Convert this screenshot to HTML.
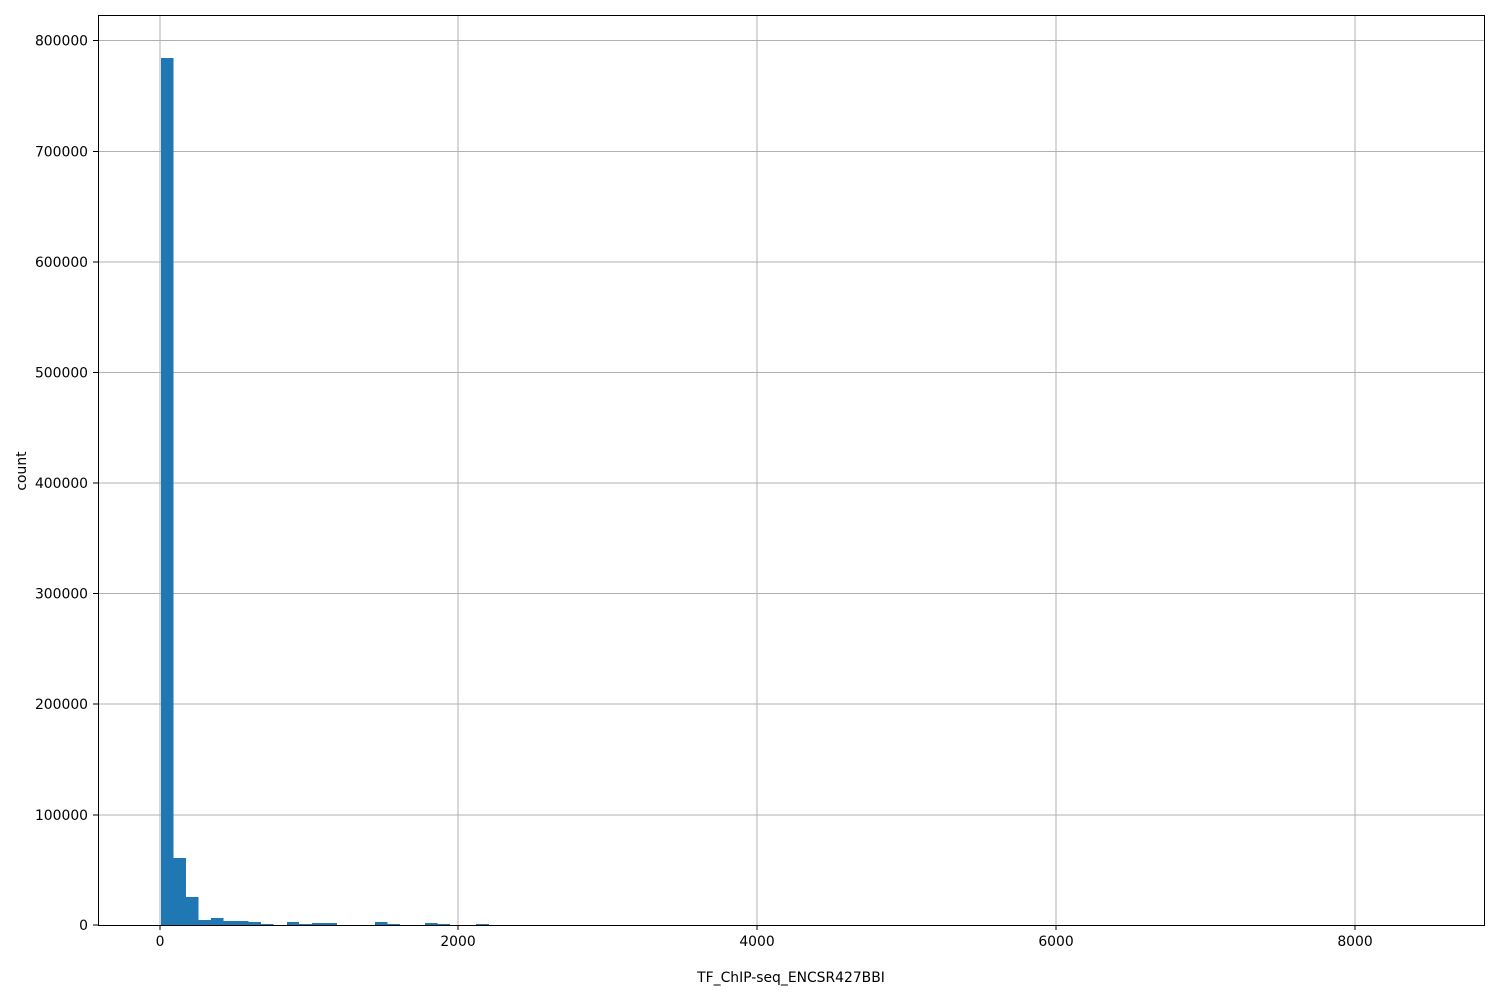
<!DOCTYPE html><html><head><style>body{margin:0;background:#fff}svg{display:block;font-family:"DejaVu Sans",sans-serif}</style></head><body>
<svg width="1500" height="1000" viewBox="0 0 1500 1000">
<g stroke="#b0b0b0" stroke-width="1">
<line x1="160" y1="15" x2="160" y2="925"/><line x1="458" y1="15" x2="458" y2="925"/><line x1="757" y1="15" x2="757" y2="925"/><line x1="1056" y1="15" x2="1056" y2="925"/><line x1="1355" y1="15" x2="1355" y2="925"/>
<line x1="98" y1="40.5" x2="1485" y2="40.5"/><line x1="98" y1="151.5" x2="1485" y2="151.5"/><line x1="98" y1="262" x2="1485" y2="262"/><line x1="98" y1="372.5" x2="1485" y2="372.5"/><line x1="98" y1="483" x2="1485" y2="483"/><line x1="98" y1="593.5" x2="1485" y2="593.5"/><line x1="98" y1="704" x2="1485" y2="704"/><line x1="98" y1="815" x2="1485" y2="815"/>
</g>
<g fill="#1f77b4">
<rect x="161" y="58" width="12.5" height="867"/>
<rect x="173.5" y="858" width="12.5" height="67"/>
<rect x="186" y="897" width="12.5" height="28"/>
<rect x="198.5" y="920" width="12.5" height="5"/>
<rect x="211" y="918" width="12.5" height="7"/>
<rect x="223.5" y="921" width="25" height="4"/>
<rect x="248.5" y="922" width="12.5" height="3"/>
<rect x="261" y="924" width="12.5" height="1"/>
<rect x="287" y="922" width="12" height="3"/>
<rect x="299" y="924" width="13" height="1"/>
<rect x="312" y="923" width="25" height="2"/>
<rect x="375" y="922" width="12.5" height="3"/>
<rect x="387.5" y="924" width="12.5" height="1"/>
<rect x="425" y="923" width="12.5" height="2"/>
<rect x="437.5" y="924" width="12.5" height="1"/>
<rect x="476" y="924" width="13" height="1"/>
</g>
<rect x="98.5" y="15.5" width="1386" height="910" fill="none" stroke="#000" stroke-width="1"/>
<g stroke="#000"><line x1="160" y1="925" x2="160" y2="930"/><line x1="458" y1="925" x2="458" y2="930"/><line x1="757" y1="925" x2="757" y2="930"/><line x1="1056" y1="925" x2="1056" y2="930"/><line x1="1355" y1="925" x2="1355" y2="930"/>
<line x1="93" y1="40.5" x2="98" y2="40.5"/><line x1="93" y1="151.5" x2="98" y2="151.5"/><line x1="93" y1="262" x2="98" y2="262"/><line x1="93" y1="372.5" x2="98" y2="372.5"/><line x1="93" y1="483" x2="98" y2="483"/><line x1="93" y1="593.5" x2="98" y2="593.5"/><line x1="93" y1="704" x2="98" y2="704"/><line x1="93" y1="815" x2="98" y2="815"/><line x1="93" y1="925" x2="98" y2="925"/></g>
<g font-size="13.9" text-anchor="middle" fill="#000">
<text x="160" y="946">0</text><text x="458" y="946">2000</text><text x="757" y="946">4000</text><text x="1056" y="946">6000</text><text x="1355" y="946">8000</text>
<text x="791" y="982">TF_ChIP-seq_ENCSR427BBI</text>
</g>
<g font-size="13.9" text-anchor="end" fill="#000">
<text x="88" y="45.5">800000</text><text x="88" y="156.5">700000</text><text x="88" y="267">600000</text><text x="88" y="377.5">500000</text><text x="88" y="488">400000</text><text x="88" y="598.5">300000</text><text x="88" y="709">200000</text><text x="88" y="820">100000</text><text x="88" y="930">0</text>
</g>
<text x="26" y="471" font-size="13.9" text-anchor="middle" transform="rotate(-90 26 471)">count</text>
</svg></body></html>
